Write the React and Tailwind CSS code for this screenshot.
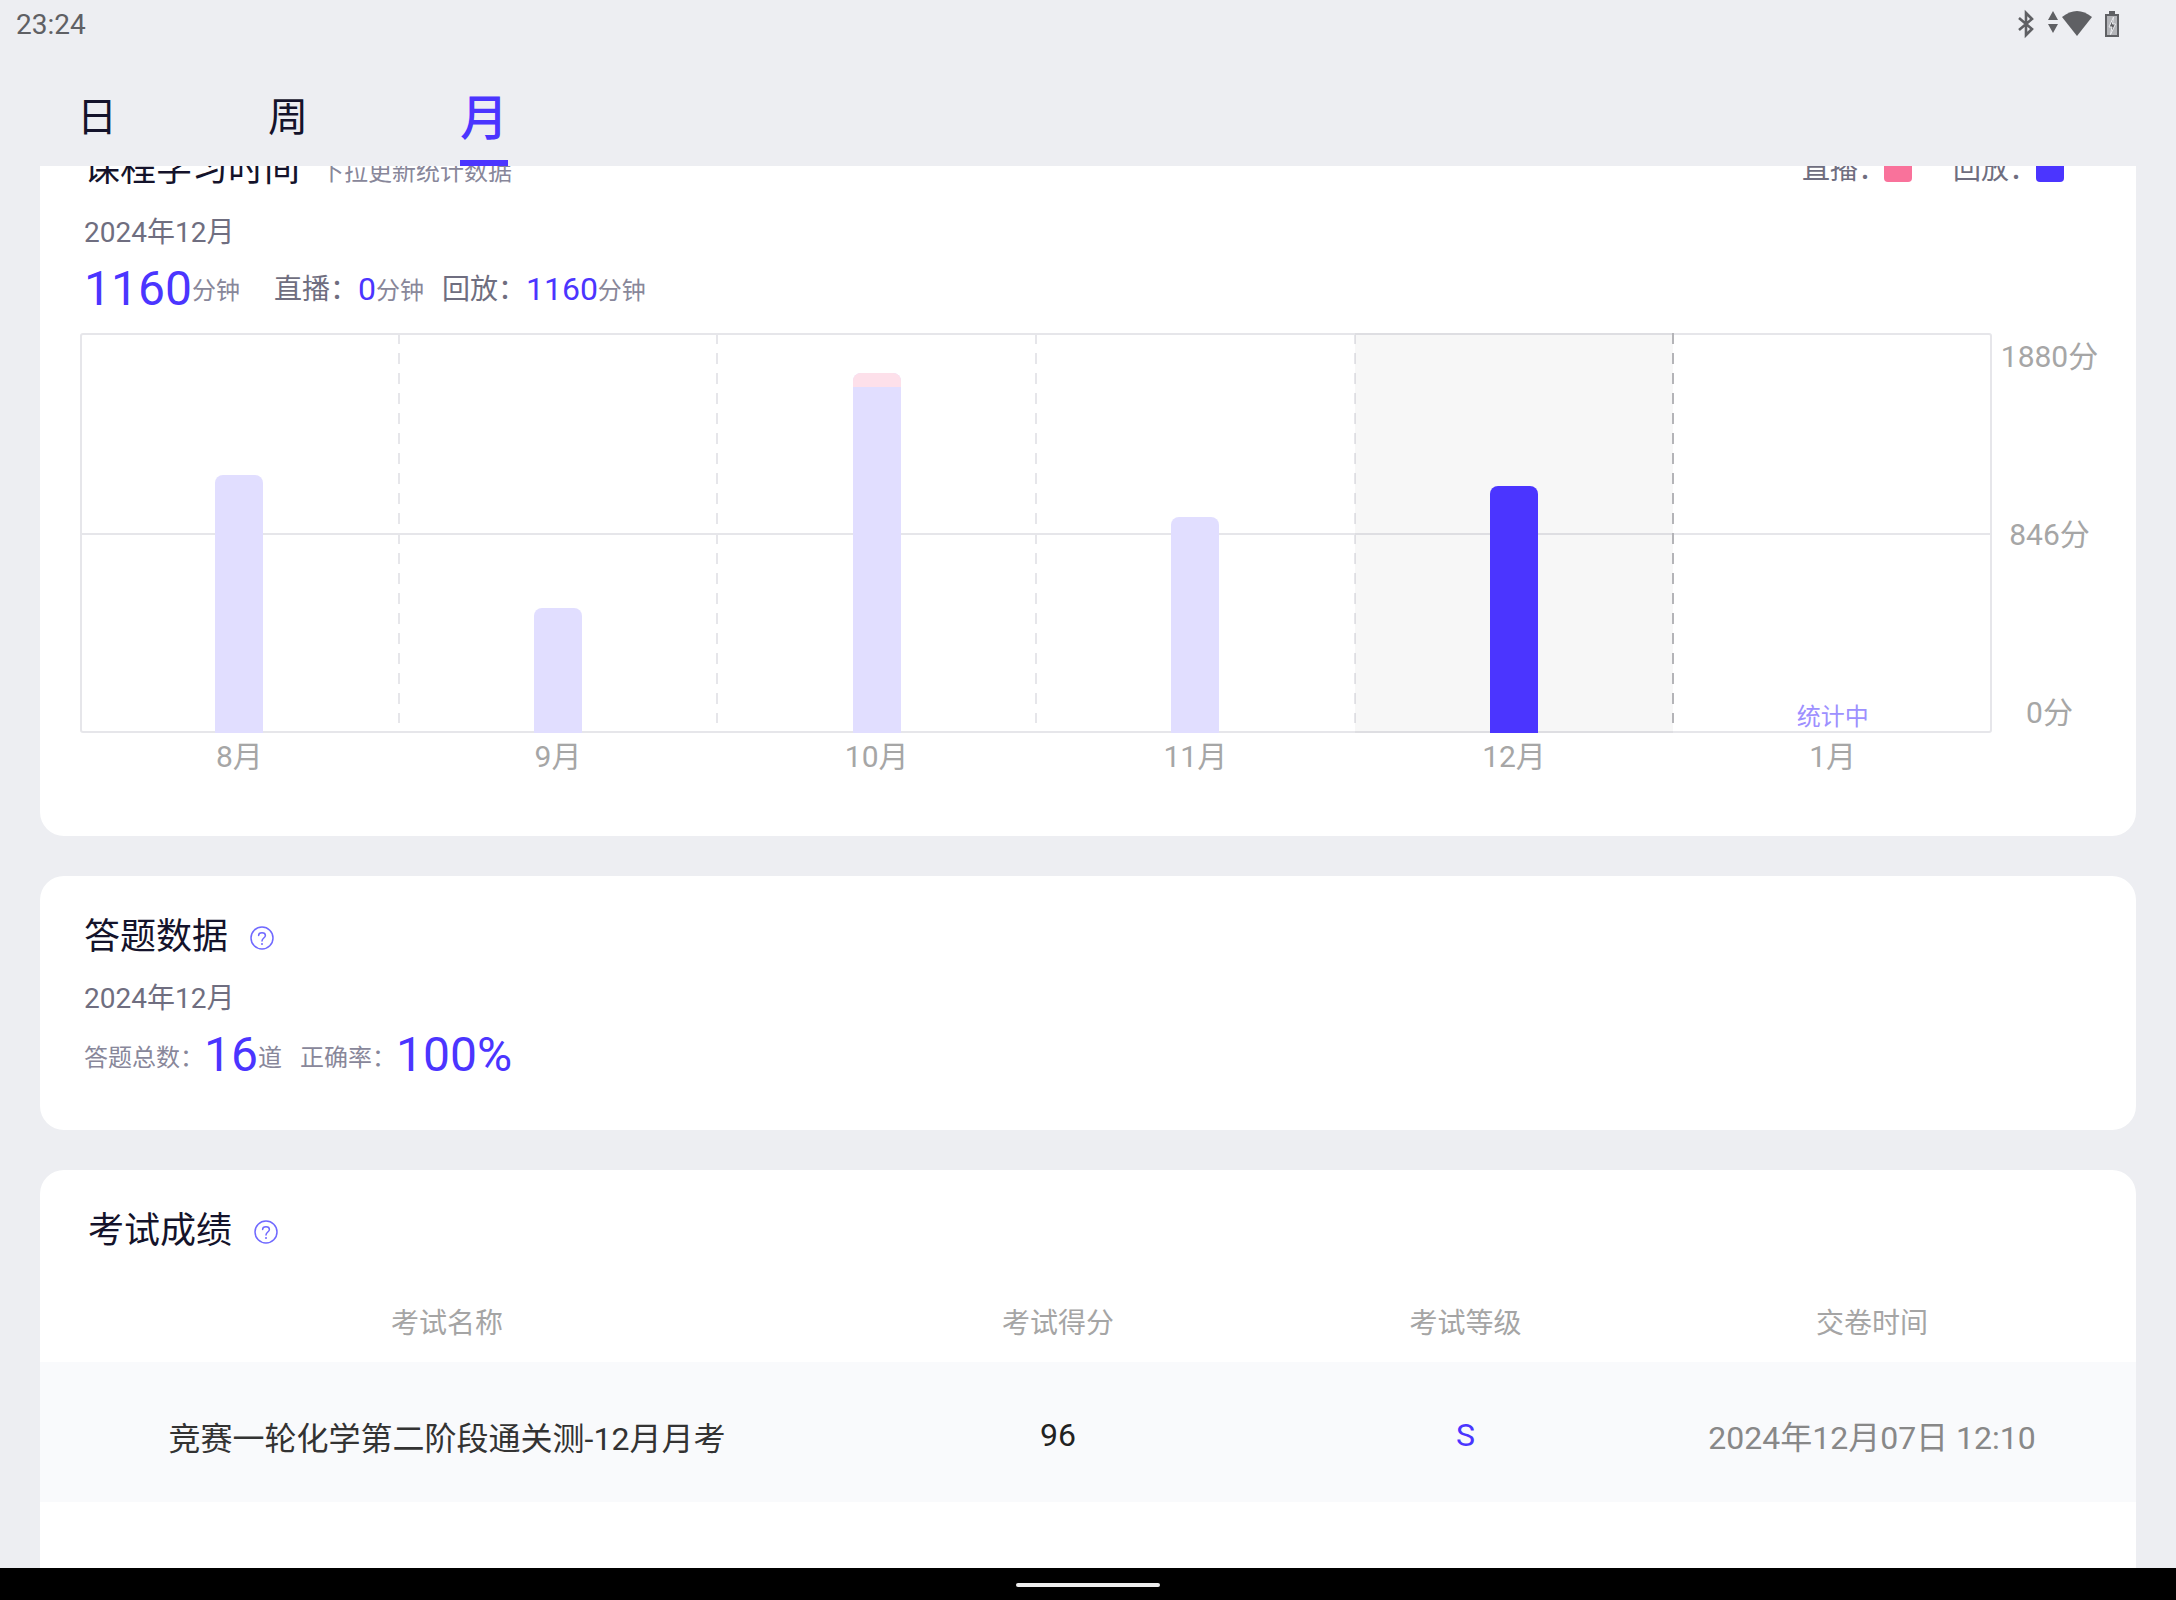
import React from "react";

const months = [
  { label: "8月", bar: 258 },
  { label: "9月", bar: 125 },
  { label: "10月", bar: 360, live: 14 },
  { label: "11月", bar: 216 },
  { label: "12月", bar: 247, active: true },
  { label: "1月", bar: 0, counting: true },
];

const StatusIcons = () => (
  <svg width="120" height="40" viewBox="0 0 120 40" className="mb-[2px] text-[#5f6064]">
    <path d="M9 14 L22 25 L16 31 V9 L22 15 L9 26" fill="none" stroke="currentColor" strokeWidth="2.6" />
    <path d="M43 7 L48 16 H38 Z M43 29 L38 20 H48 Z" fill="currentColor" />
    <path d="M52 13 Q67 1 82 13 L67 32 Z" fill="currentColor" />
    <path d="M95 10 H99 V7 H105 V10 H109 V33 H95 Z" fill="currentColor" />
    <path d="M97 12 H107 V31 H97 Z" fill="#b4b5b9" />
    <path d="M103.5 13 L99 23 H102 L100.5 30.5 L105.5 20 H102.5 Z" fill="#5f6064" stroke="#edeef2" strokeWidth="1" />
  </svg>
);

const HelpIcon = () => (
  <svg width="24" height="24" viewBox="0 0 24 24" fill="none" stroke="#7069ff" strokeWidth="1.5" strokeLinecap="round">
    <circle cx="12" cy="12" r="11" />
    <path d="M8.6 9.4 C8.6 5.8 15.4 5.8 15.4 9.4 C15.4 12 12 12 12 15" />
    <path d="M12 18 V18.1" strokeWidth="2" />
  </svg>
);

const Unit = ({ children }) => <span className="mt-[3px] text-[24px] text-[#88879a]">{children}</span>;

const StudyCard = () => (
  <section className="bg-white rounded-3xl h-[740px] px-[44px] pt-[70px] -mt-[70px]">
    <div className="flex items-end justify-between h-[40px] -mt-[17px]">
      <div className="flex items-end">
        <h2 className="text-[36px] leading-[40px] text-[#14132b]">课程学习时间</h2>
        <span className="ml-[20px] text-[24px] leading-[34px] text-[#88879a]">下拉更新统计数据</span>
      </div>
      <div className="flex items-end text-[28px] leading-[38px] text-[#6f6e80] pr-[28px]">
        <span>直播：</span>
        <span className="w-[28px] h-[24px] mb-[7px] mr-[41px] -ml-[2px] rounded-[4px] bg-[#f9729b]" />
        <span>回放：</span>
        <span className="w-[28px] h-[24px] mb-[7px] -ml-[1px] rounded-[4px] bg-[#4b35ff]" />
      </div>
    </div>
    <p className="mt-[24px] text-[28px] leading-[40px] text-[#6f6e80]">2024年12月</p>
    <div className="flex items-center h-[56px] mt-[8px] text-[#6f6e80]">
      <span className="text-[48px] leading-[56px] text-[#4b35ff]">1160</span>
      <Unit>分钟</Unit>
      <span className="ml-[34px] mt-[1px] text-[28px]">直播：</span>
      <span className="text-[32px] text-[#4b35ff]">0</span>
      <Unit>分钟</Unit>
      <span className="ml-[18px] mt-[1px] text-[28px]">回放：</span>
      <span className="text-[32px] text-[#4b35ff]">1160</span>
      <Unit>分钟</Unit>
    </div>
    <div className="flex -ml-[4px] mt-[16px]">
      <div className="w-[1912px] shrink-0">
        <div className="relative h-[400px] border-2 border-[#e6e6ea] rounded-[3px]">
          <div className="absolute left-0 right-0 top-[198px] h-[2px] bg-[#e6e6ea]" />
          <div className="absolute -inset-[2px] grid grid-cols-6">
            {months.map((m, i) => (
              <div
                key={m.label}
                className={`relative flex flex-col items-center justify-end ${m.active ? "bg-[#00000008]" : ""}`}
              >
                {i < 5 && (
                  <div
                    className={`absolute -right-px top-0 bottom-[10px] w-[2px] ${
                      m.active
                        ? "bg-[repeating-linear-gradient(to_bottom,#b4b4b8_0_11px,transparent_11px_20px)]"
                        : "bg-[repeating-linear-gradient(to_bottom,#e6e6ea_0_11px,transparent_11px_20px)]"
                    }`}
                  />
                )}
                {m.bar > 0 && (
                  <div
                    className={`w-[48px] rounded-t-[8px] overflow-hidden ${
                      m.active ? "bg-[#4b35ff]" : "bg-[#e1deff]"
                    }`}
                    style={{ height: m.bar }}
                  >
                    {m.live && <div className="bg-[#fde0ea]" style={{ height: m.live }} />}
                  </div>
                )}
                {m.counting && <span className="mb-[4px] text-[24px] leading-[24px] text-[#9d90ff]">统计中</span>}
              </div>
            ))}
          </div>
        </div>
        <div className="grid grid-cols-6 mt-[6px] text-[30px] leading-[36px] text-[#a6a6a6] text-center">
          {months.map((m) => (
            <span key={m.label}>{m.label}</span>
          ))}
        </div>
      </div>
      <div className="flex-1 -mr-[15px] flex flex-col items-center whitespace-nowrap text-[30px] leading-[40px] text-[#a6a6a6]">
        <span className="mt-[4px]">1880分</span>
        <span className="mt-[138px]">846分</span>
        <span className="mt-[138px]">0分</span>
      </div>
    </div>
  </section>
);

const AnswerCard = () => (
  <section className="bg-white rounded-3xl h-[254px] mt-[40px] px-[44px] pt-[37px]">
    <div className="flex items-center h-[48px]">
      <h2 className="text-[36px] leading-[48px] text-[#14132b]">答题数据</h2>
      <span className="ml-[22px] mt-[1px]">
        <HelpIcon />
      </span>
    </div>
    <p className="mt-[18px] text-[28px] leading-[40px] text-[#6f6e80]">2024年12月</p>
    <div className="flex items-center h-[56px] mt-[8px] text-[24px] text-[#88879a]">
      <span className="mt-[5px]">答题总数：</span>
      <span className="text-[48px] leading-[56px] text-[#4b35ff]">16</span>
      <span className="mt-[5px]">道</span>
      <span className="ml-[18px] mt-[5px]">正确率：</span>
      <span className="text-[48px] leading-[56px] text-[#4b35ff]">100%</span>
    </div>
  </section>
);

const ExamCard = () => (
  <section className="bg-white rounded-t-3xl h-[500px] mt-[40px] pt-[37px]">
    <div className="flex items-center h-[48px] pl-[48px]">
      <h2 className="text-[36px] leading-[48px] text-[#14132b]">考试成绩</h2>
      <span className="ml-[22px] mt-[1px]">
        <HelpIcon />
      </span>
    </div>
    <div className="grid grid-cols-[814px_408px_407px_406px] mt-[45px] h-[48px] text-[28px] leading-[48px] text-[#a5a5a5] text-center">
      <span>考试名称</span>
      <span>考试得分</span>
      <span>考试等级</span>
      <span>交卷时间</span>
    </div>
    <div className="grid grid-cols-[814px_408px_407px_406px] mt-[14px] h-[140px] pt-[6px] items-center text-center text-[32px] bg-[#f9fafc]">
      <span className="text-[#333333] pt-[8px]">竞赛一轮化学第二阶段通关测-12月月考</span>
      <span className="text-[#222222]">96</span>
      <span className="text-[#4b35ff]">S</span>
      <span className="text-[#888888] pt-[6px] whitespace-nowrap">2024年12月07日 12:10</span>
    </div>
  </section>
);

export default function App() {
  return (
    <div className="w-[2176px] h-[1600px] flex flex-col overflow-hidden bg-[#edeef2] font-['Roboto','Noto_Sans_CJK_SC',sans-serif]">
      <header className="h-[166px] shrink-0 relative z-10 bg-[#edeef2]">
        <div className="flex items-center justify-between h-[50px] pl-[16px] pr-[46px]">
          <span className="text-[28px] text-[#5f6064]">23:24</span>
          <StatusIcons />
        </div>
        <nav className="flex items-end h-[116px] pl-[77px] text-[40px] text-[#14132b]">
          <button className="w-[191px] h-full text-left pt-[38px] flex items-start">日</button>
          <button className="w-[192px] h-full text-left pt-[38px] flex items-start">周</button>
          <button className="relative w-[48px] h-full pt-[33px] flex items-start justify-center text-[48px] leading-[72px] font-medium text-[#4b35ff]">
            月
            <span className="absolute left-0 right-0 bottom-0 h-[6px] bg-[#4b35ff]" />
          </button>
        </nav>
      </header>
      <main className="flex-1 overflow-hidden px-[40px]">
        <StudyCard />
        <AnswerCard />
        <ExamCard />
      </main>
      <footer className="h-[32px] shrink-0 bg-black flex justify-center pt-[15px]">
        <div className="w-[144px] h-[4px] rounded-full bg-[#eeeeee]" />
      </footer>
    </div>
  );
}
